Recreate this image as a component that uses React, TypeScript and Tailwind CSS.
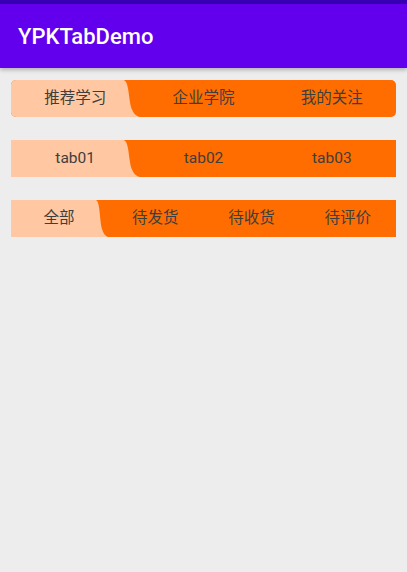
import { useState } from "react";

const BARS = [
  { tabs: ["推荐学习", "企业学院", "我的关注"], rounded: true },
  { tabs: ["tab01", "tab02", "tab03"], rounded: false },
  { tabs: ["全部", "待发货", "待收货", "待评价"], rounded: false },
];

// peach wedge behind the selected tab, right edge is a soft S curve
function Wedge() {
  return (
    <svg className="absolute left-0 top-0 h-full w-[calc(100%+2px)]" viewBox="0 0 100 37" preserveAspectRatio="none">
      <path d="M0 0 H86 C91 0 90 22 93 30 C95 36 98 37 100 37 H0 Z" fill="#ffc8a2" />
    </svg>
  );
}

function TabBar({ tabs, rounded }: { tabs: string[]; rounded: boolean }) {
  const [active, setActive] = useState(0);
  return (
    <div className={`flex h-[37px] bg-[#ff6d00] overflow-hidden ${rounded ? "rounded-[5px]" : ""}`}>
      {tabs.map((t, i) => (
        <button key={t} onClick={() => setActive(i)}
          className={`relative flex-1 flex items-center justify-center text-[15.5px] text-[#3e3e3e] ${i === active ? "z-10" : ""}`}>
          {i === active && <Wedge />}
          <span className="relative">{t}</span>
        </button>
      ))}
    </div>
  );
}

export default function App() {
  return (
    <div className="min-h-[572px] bg-[#ededed]" style={{ fontFamily: "Roboto, 'Noto Sans CJK SC', sans-serif" }}>
      <div className="h-[4px] bg-[#3700b3]" />
      <div className="h-[64px] bg-[#6200ee] flex items-center px-[18px] shadow-[0_2px_4px_rgba(0,0,0,0.25)]">
        <span className="text-white text-[22px] font-medium">YPKTabDemo</span>
      </div>
      <div className="flex flex-col gap-[23px] px-[11px] pt-[12px]">
        {BARS.map((b, i) => <TabBar key={i} tabs={b.tabs} rounded={b.rounded} />)}
      </div>
    </div>
  );
}
